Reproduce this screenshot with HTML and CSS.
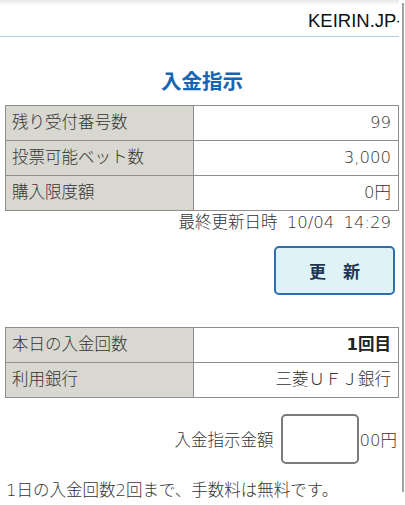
FILE: index.html
```html
<!DOCTYPE html>
<html lang="ja">
<head>
<meta charset="utf-8">
<title>入金指示</title>
<link rel="stylesheet" href="styles.css">
</head>
<body>
<div class="page">
  <header class="topbar"><span class="brand">KEIRIN.JP-</span></header>
  <main class="content">
    <h1 class="title">入金指示</h1>
    <table class="info">
      <tr><th>残り受付番号数</th><td>99</td></tr>
      <tr><th>投票可能ベット数</th><td>3,000</td></tr>
      <tr><th>購入限度額</th><td>0円</td></tr>
    </table>
    <p class="updated">最終更新日時 10/04 14:29</p>
    <div class="btnrow"><button class="btn" type="button">更　新</button></div>
    <table class="info second">
      <tr><th>本日の入金回数</th><td class="strong">1回目</td></tr>
      <tr><th>利用銀行</th><td>三菱ＵＦＪ銀行</td></tr>
    </table>
    <div class="amount">
      <label class="amount-label" for="amt">入金指示金額</label>
      <input class="amount-input" id="amt" type="text">
      <span class="unit">00円</span>
    </div>
    <p class="note">1日の入金回数2回まで、手数料は無料です。</p>
  </main>
  <div class="scrollline"></div>
</div>
</body>
</html>
```

FILE: styles.css
```css
html, body {
  margin: 0;
  padding: 0;
  background: #fff;
}
body {
  font-family: "DejaVu Sans", "Noto Sans CJK JP", sans-serif;
  font-weight: 300;
  color: #353535;
  font-size: 16.5px;
}
.page {
  position: relative;
  width: 405px;
  min-height: 505px;
  overflow: hidden;
}
.topbar {
  height: 27px;
  padding: 9px 0 0 308px;
  width: 91px;
  overflow: hidden;
  white-space: nowrap;
  border-bottom: 1px solid #a9cfe9;
  background: linear-gradient(to bottom, rgba(0,0,0,0.09) 0, rgba(0,0,0,0) 6px);
  font-family: "Liberation Sans", Arial, sans-serif;
  font-weight: normal;
  font-size: 18.5px;
  line-height: 24px;
  color: #111;
}
.content {
  padding: 0 6px 0 5px;
}
.title {
  margin: 28px 0 10px;
  text-align: center;
  font-family: "Noto Sans CJK JP", sans-serif;
  font-size: 20.5px;
  line-height: 30px;
  font-weight: bold;
  color: #1765b2;
}
.info {
  width: 100%;
  border-collapse: collapse;
  table-layout: fixed;
}
.info th, .info td {
  border: 1px solid #8e8e8e;
  height: 34px;
  padding: 0 7px;
  line-height: 24px;
  font-size: 16.5px;
  font-weight: 300;
  color: #353535;
}
.info th {
  width: 174px;
  background: #d8d8d0;
  text-align: left;
  padding-left: 6px;
}
.info td {
  text-align: right;
  background: #fff;
}
.info td.strong {
  font-weight: bold;
  color: #222;
}
.updated {
  margin: 0;
  padding-right: 8px;
  text-align: right;
  line-height: 24px;
  word-spacing: 4px;
}
.btnrow {
  display: flex;
  justify-content: flex-end;
  padding: 11px 4px 0 0;
}
.btn {
  width: 121px;
  height: 49px;
  box-sizing: border-box;
  border: 2px solid #2d6fae;
  border-radius: 5px;
  background: #dff3f6;
  font-family: "Noto Sans CJK JP", sans-serif;
  font-size: 17px;
  font-weight: bold;
  color: #1f3656;
  padding: 0;
}
.second {
  margin-top: 32px;
}
.amount {
  display: flex;
  justify-content: flex-end;
  align-items: center;
  margin-top: 16px;
  padding-right: 2px;
}
.amount-label {
  margin-right: 7px;
}
.amount-input {
  width: 78px;
  height: 50px;
  box-sizing: border-box;
  border: 2px solid #7a7a7a;
  border-radius: 5px;
  background: #fff;
  margin: 0 1px 0 0;
  padding: 0;
}
.unit {
  display: inline-block;
}
.note {
  margin: 15px 0 0 1px;
  line-height: 24px;
}
.scrollline {
  position: absolute;
  left: 402px;
  top: 3px;
  width: 2px;
  height: 489px;
  background: #a2a2a2;
}
```
